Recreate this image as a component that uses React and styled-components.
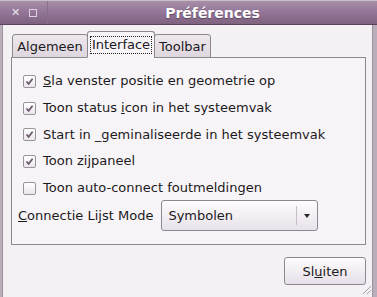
import React from 'react';
import styled, { createGlobalStyle } from 'styled-components';

const GlobalStyle = createGlobalStyle`
  html, body {
    margin: 0;
    padding: 0;
    background: #b9aeb9;
  }
  body {
    font-family: "DejaVu Sans", "Liberation Sans", sans-serif;
    font-size: 13px;
    color: #1c1a1c;
  }
`;

const rows = [
  { pre: '', key: 'S', post: 'la venster positie en geometrie op', checked: true },
  { pre: 'Toon status ', key: 'i', post: 'con in het systeemvak', checked: true },
  { pre: 'Start in _geminaliseerde in het systeemvak', key: '', post: '', checked: true },
  { pre: 'Toon zijpaneel', key: '', post: '', checked: true },
  { pre: 'Toon auto-connect foutmeldingen', key: '', post: '', checked: false },
];

const App = () => {
  return (
    <>
      <GlobalStyle />
      <Window>
        <TitleBar>
          <TitleButtons>
            <TitleGlyph>✕</TitleGlyph>
            <MaxBox />
          </TitleButtons>
          <Title>Préférences</Title>
        </TitleBar>
        <Body>
          <Tabs>
            <Tab width={76}>Algemeen</Tab>
            <Tab active width={68}>
              <Focus>Interface</Focus>
            </Tab>
            <Tab width={57}>Toolbar</Tab>
          </Tabs>
          <Panel>
            {rows.map((r) => (
              <CheckRow key={r.pre + r.post}>
                <Box>
                  {r.checked && (
                    <svg width="9" height="9" viewBox="0 0 9 9">
                      <path d="M1.5 4.5 L3.6 6.8 L7.6 1.8" fill="none" stroke="#6a5a6c" strokeWidth="1.8" />
                    </svg>
                  )}
                </Box>
                <span>
                  {r.pre}
                  {r.key && <u>{r.key}</u>}
                  {r.post}
                </span>
              </CheckRow>
            ))}
            <ComboRow>
              <span>
                <u>C</u>onnectie Lijst Mode
              </span>
              <Combo>
                <ComboText>Symbolen</ComboText>
                <ComboArrow>
                  <svg width="6" height="4" viewBox="0 0 6 4">
                    <path d="M0 0 L6 0 L3 4 Z" fill="#2a262a" />
                  </svg>
                </ComboArrow>
              </Combo>
            </ComboRow>
          </Panel>
          <Footer>
            <Button>
              Sl<u>u</u>iten
            </Button>
          </Footer>
          <Grip>
            <svg width="12" height="12" viewBox="0 0 12 12">
              <path d="M11 3 L3 11 M11 7 L7 11" stroke="#a89ea8" strokeWidth="1" />
            </svg>
          </Grip>
        </Body>
      </Window>
    </>
  );
};

const Window = styled.div`
  width: 377px;
  height: 297px;
  display: flex;
  flex-direction: column;
  overflow: hidden;
`;

const TitleBar = styled.div`
  height: 25px;
  display: flex;
  align-items: center;
  background: linear-gradient(#a78ea6 0%, #94779a 45%, #7f627f 100%);
  border-top: 1px solid #c9bdc9;
  border-bottom: 1px solid #5b445b;
  box-sizing: border-box;
`;

const TitleButtons = styled.div`
  width: 48px;
  height: 100%;
  display: flex;
  align-items: center;
  gap: 9px;
  padding-left: 11px;
  box-sizing: border-box;
  border-right: 1px solid #8a6f8a;
`;

const TitleGlyph = styled.span`
  color: #ece4ec;
  font-size: 11px;
  font-weight: bold;
  line-height: 1;
`;

const MaxBox = styled.span`
  width: 6px;
  height: 6px;
  border: 1.5px solid #ddd2dd;
`;

const Title = styled.div`
  flex: 1;
  text-align: center;
  color: #ffffff;
  font-weight: bold;
  font-size: 14px;
  text-shadow: 0 1px 1px #5d455d;
`;

const Body = styled.div`
  position: relative;
  flex: 1;
  background: #f4f1f4;
  border-left: 1px solid #9b929b;
  border-right: 1px solid #9b929b;
  margin: 0 4px 0 2px;
  padding: 7px 6px 0 8px;
  display: flex;
  flex-direction: column;
`;

const Tabs = styled.div`
  display: flex;
  align-items: flex-end;
  height: 26px;
  padding-left: 1px;
  margin-bottom: -1px;
  position: relative;
  z-index: 1;
`;

const Tab = styled.div`
  width: ${(p) => p.width}px;
  height: ${(p) => (p.active ? '27px' : '24px')};
  display: flex;
  align-items: center;
  justify-content: center;
  box-sizing: border-box;
  border: 1px solid #8e888e;
  border-bottom: ${(p) => (p.active ? '1px solid #f7f4f7' : '1px solid #8e888e')};
  border-radius: 3px 3px 0 0;
  background: ${(p) => (p.active ? '#f7f4f7' : 'linear-gradient(#ede8ed, #ded6de)')};
  margin-right: -1px;
  font-size: 13px;
`;

const Focus = styled.span`
  border: 1px dotted #222;
  padding: 0 1px;
  line-height: 16px;
`;

const Panel = styled.div`
  height: 188px;
  box-sizing: border-box;
  border: 1px solid #8e888e;
  background: #f7f4f7;
  padding: 10px 0 0 11px;
  display: flex;
  flex-direction: column;
`;

const CheckRow = styled.div`
  height: 26.7px;
  display: flex;
  align-items: center;
  gap: 7px;
  line-height: 16px;
`;

const Box = styled.span`
  width: 11px;
  height: 11px;
  border: 1px solid #9a939c;
  border-radius: 2px;
  background: linear-gradient(#ffffff, #ebe6ec);
  display: flex;
  align-items: center;
  justify-content: center;
`;

const ComboRow = styled.div`
  display: flex;
  align-items: center;
  gap: 8px;
  margin: -1px 0 0 -5px;
`;

const Combo = styled.div`
  width: 157px;
  height: 31px;
  box-sizing: border-box;
  border: 1px solid #8f8894;
  border-radius: 3px;
  background: linear-gradient(#fdfcfd, #e8e2ea);
  display: flex;
  align-items: center;
`;

const ComboText = styled.span`
  flex: 1;
  padding-left: 6px;
`;

const ComboArrow = styled.span`
  width: 20px;
  height: 19px;
  border-left: 1px solid #c6bec9;
  display: flex;
  align-items: center;
  justify-content: center;
`;

const Footer = styled.div`
  display: flex;
  justify-content: flex-end;
  padding-top: 12px;
`;

const Button = styled.button`
  width: 82px;
  height: 28px;
  font-family: inherit;
  font-size: 13px;
  color: #1c1a1c;
  border: 1px solid #8f8894;
  border-radius: 3px;
  background: linear-gradient(#fdfcfd, #e6dfe8);
  padding: 0;
`;

const Grip = styled.span`
  position: absolute;
  right: 0;
  bottom: 2px;
  line-height: 0;
`;

export default App;
